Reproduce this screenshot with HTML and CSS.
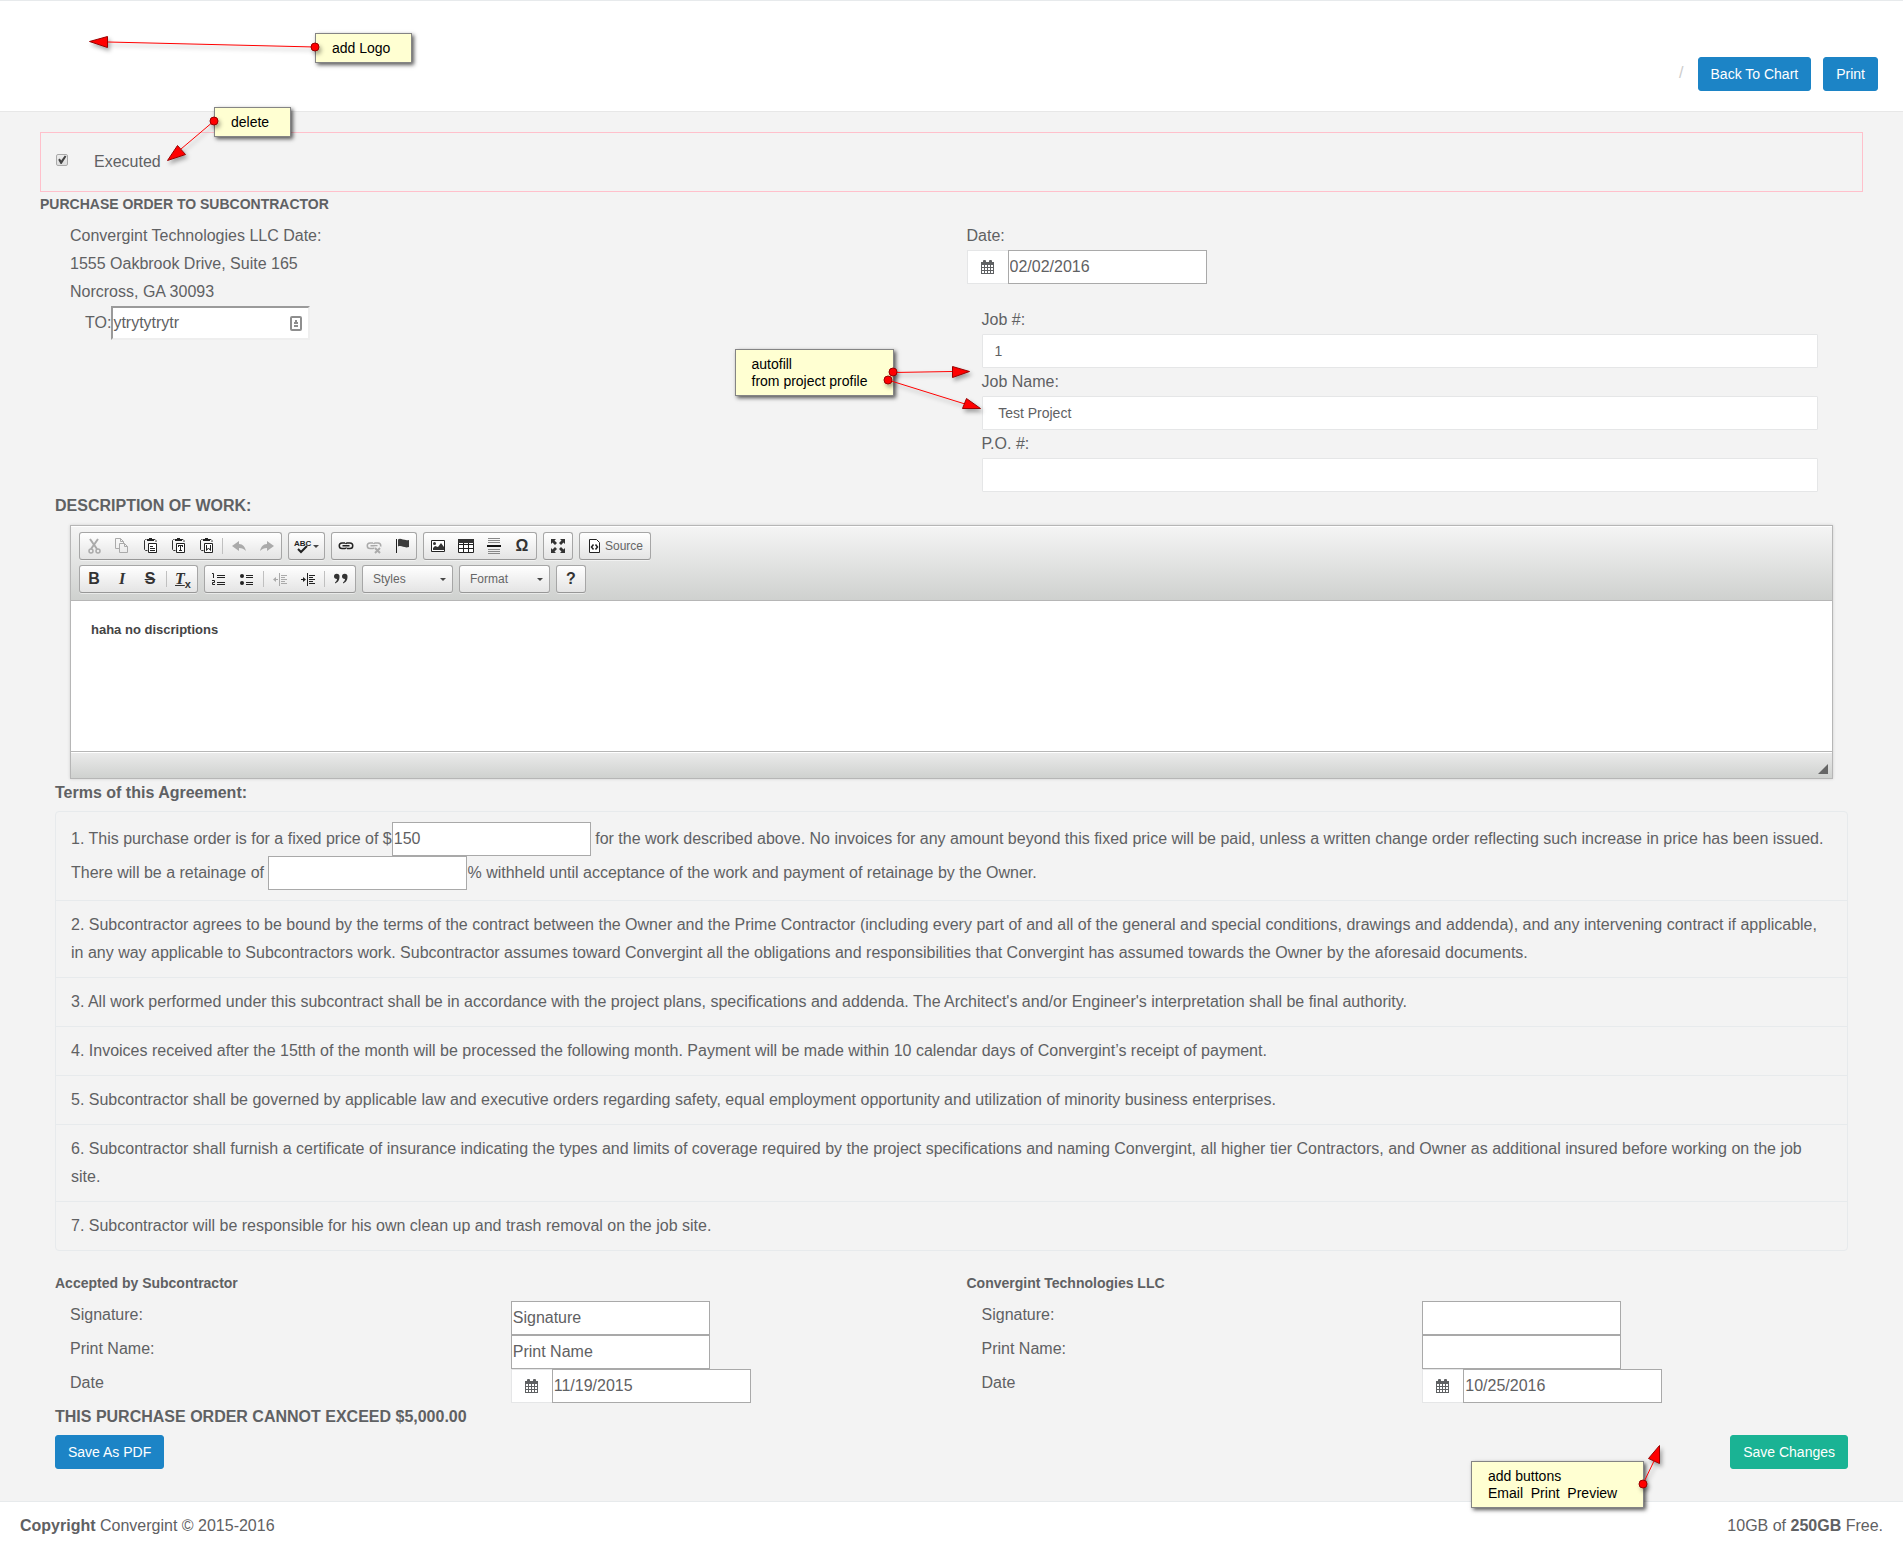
FILE: index.html
```html
<!DOCTYPE html>
<html lang="en">
<head>
<meta charset="utf-8">
<meta name="viewport" content="width=device-width, initial-scale=1">
<title>Purchase Order to Subcontractor</title>
<link rel="stylesheet" href="styles.css">
</head>
<body>
<svg class="sprite" aria-hidden="true">
  <symbol id="calendar" viewBox="0 0 14 15">
    <path fill="currentColor" fill-rule="evenodd" d="M0 2h2V1a1 1 0 0 1 1-1h1a1 1 0 0 1 1 1v1h3V1a1 1 0 0 1 1-1h1a1 1 0 0 1 1 1v1h2v12H0zM1 5v2h2V5zm3 0v2h2V5zm3 0v2h2V5zm3 0v2h2V5zM1 8v2h2V8zm3 0v2h2V8zm3 0v2h2V8zm3 0v2h2V8zM1 11v2h2v-2zm3 0v2h2v-2zm3 0v2h2v-2zm3 0v2h2v-2z"/>
  </symbol>
  <symbol id="clipboard" viewBox="0 0 16 16">
    <path fill="none" stroke="#333" d="M4.500 1.500h-1l-1 1v9l1 1h2M12 1.500h1l1 1V4"/>
    <path fill="#222" d="M5 1h2V0h3v1h2v2H5z"/>
    <path fill="#fff" stroke="#222" d="M6.500 5.500h8v9h-8z"/>
  </symbol>
  <symbol id="link" viewBox="0 0 16 16">
    <path fill="none" stroke="currentColor" stroke-width="1.500" d="M7 5H4a2.500 2.500 0 0 0 0 5.500h3a2 2 0 0 0 1.500-1M9 10.500h3A2.500 2.500 0 0 0 12 5H9a2 2 0 0 0-1.500 1M4.500 7.800h7"/>
  </symbol>
</svg>

<header class="page-header">
  <nav class="page-actions">
    <span class="slash">/</span>
    <a class="btn btn-blue" href="#">Back To Chart</a>
    <button class="btn btn-blue" type="button">Print</button>
  </nav>
  <aside class="callout callout-logo">
    <div class="note">add Logo</div>
    <svg class="pointer" viewBox="0 0 420 70" width="420" height="70">
      <path class="lead" d="M315 47 108 42"/><path class="head" d="M89.500 41.500 107.500 36.500V47.500z"/><circle class="dot" cx="315" cy="47" r="4"/>
    </svg>
  </aside>
</header>

<main class="content">
  <div class="executed">
    <input type="checkbox" id="executed" class="check" checked>
    <label for="executed">Executed</label>
    <aside class="callout callout-delete">
      <div class="note">delete</div>
      <svg class="pointer" viewBox="160 100 140 70" width="140" height="70">
        <path class="lead" d="M214 121 181 149"/><path class="head" d="M167.500 160.500 177.500 145.500 185.500 154.500z"/><circle class="dot" cx="214" cy="121" r="4"/>
      </svg>
    </aside>
  </div>

  <h1 class="heading">PURCHASE ORDER TO SUBCONTRACTOR</h1>

  <section class="halves">
    <div class="half vendor">
      <div>Convergint Technologies LLC Date:</div>
      <div>1555 Oakbrook Drive, Suite 165</div>
      <div>Norcross, GA 30093</div>
      <div class="to-row">
        <label for="to">TO:</label>
        <span class="to-field">
          <input id="to" class="plain-input inset" type="text" value="ytrytytrytr">
          <svg class="autofill-icon" viewBox="0 0 12 15" width="12" height="15" aria-hidden="true"><rect x="1" y="1" width="10" height="13" rx="1" fill="#fff" stroke="#8e8e8e" stroke-width="2"/><path fill="#8e8e8e" d="M5 4h2v2h1v2H4V6h1zM4 9h4v2H4z"/></svg>
        </span>
      </div>
    </div>
    <div class="half">
      <label class="line" for="date">Date:</label>
      <div class="date-group">
        <span class="addon"><svg width="14" height="15" aria-hidden="true"><use href="#calendar"/></svg></span>
        <input id="date" class="plain-input" type="text" value="02/02/2016">
      </div>
      <div class="job">
        <label class="line" for="job-no">Job #:</label>
        <input id="job-no" class="form-control" type="text" value="1">
        <label class="line" for="job-name">Job Name:</label>
        <input id="job-name" class="form-control" type="text" value=" Test Project">
        <label class="line" for="po-no">P.O. #:</label>
        <input id="po-no" class="form-control" type="text">
        <aside class="callout callout-autofill">
          <div class="note">autofill
from project profile</div>
          <svg class="pointer" viewBox="730 340 260 80" width="260" height="80">
            <path class="lead" d="M893 372.500 952 371.500M888 380 965 404"/><path class="head" d="M969.500 371.500 952.500 366.500V377.500zM980.500 408.500 966.500 398.500 962.500 408.500z"/><circle class="dot" cx="893" cy="372" r="4"/><circle class="dot" cx="888" cy="380" r="4"/>
          </svg>
        </aside>
      </div>
    </div>
  </section>

  <section class="body-block">
    <h2 class="strong-line">DESCRIPTION OF WORK:</h2>
    <div class="editor">
      <div class="toolbar">
        <div class="tool-row">
          <div class="group">
            <button class="tool off" type="button" aria-label="Cut"><svg viewBox="0 0 16 16"><path fill="none" stroke="currentColor" stroke-width="2" d="M4 1l7 10M12 1 5 11"/><circle cx="5" cy="13" r="2" fill="none" stroke="currentColor" stroke-width="1.500"/><circle cx="12" cy="13" r="2" fill="none" stroke="currentColor" stroke-width="1.500"/></svg></button>
            <button class="tool off" type="button" aria-label="Copy"><svg viewBox="0 0 16 16"><path fill="none" stroke="currentColor" d="M5 10.500H1.500v-10h5l3 3V5M5.500 5.500h5l3 3v6h-8zM10.500 5.500v3h3M6.500.5v3h3"/></svg></button>
            <button class="tool" type="button" aria-label="Paste"><svg viewBox="0 0 16 16"><use href="#clipboard"/><path stroke="#222" d="M8 8.500h3M8 10.500h5M8 12.500h5"/></svg></button>
            <button class="tool" type="button" aria-label="Paste as plain text"><svg viewBox="0 0 16 16"><use href="#clipboard"/><path fill="#222" d="M8 7h5v2h-1V8h-1v4h1v1H9v-1h1V8H9v1H8z"/></svg></button>
            <button class="tool" type="button" aria-label="Paste from Word"><svg viewBox="0 0 16 16"><use href="#clipboard"/><path fill="none" stroke="#222" d="M8.500 7v5.500L10.500 10l2 2.500V7"/></svg></button>
            <span class="sep"></span>
            <button class="tool off" type="button" aria-label="Undo"><svg viewBox="0 0 16 16"><path fill="currentColor" d="M1 8l7-5v3c4 0 6 3 7 7-2-2-4-3-7-3v3z"/></svg></button>
            <button class="tool off" type="button" aria-label="Redo"><svg viewBox="0 0 16 16"><path fill="currentColor" d="M15 8 8 3v3c-4 0-6 3-7 7 2-2 4-3 7-3v3z"/></svg></button>
          </div>
          <div class="group">
            <button class="tool spell" type="button" aria-label="Spell check"><svg viewBox="0 0 16 16"><text x="0" y="8" class="abc">ABC</text><path fill="none" stroke="#222" stroke-width="2" d="M4 11l3 3 6-6"/></svg><i class="caret"></i></button>
          </div>
          <div class="group">
            <button class="tool" type="button" aria-label="Link"><svg viewBox="0 0 16 16"><use href="#link"/></svg></button>
            <button class="tool off" type="button" aria-label="Unlink"><svg viewBox="0 0 16 16"><use href="#link"/><path stroke="#f2f2f2" stroke-width="3" d="M8.500 10h7"/><path stroke="currentColor" stroke-width="2" d="M9 10l5 5M14 10l-5 5"/></svg></button>
            <button class="tool" type="button" aria-label="Anchor"><svg viewBox="0 0 16 16"><path stroke="#222" d="M2.500 1v14"/><path fill="#3c3c3c" d="M4 1.500c3-2 5 1.500 11 .5v7c-5 1.500-7-2-11-.5z"/></svg></button>
          </div>
          <div class="group">
            <button class="tool" type="button" aria-label="Image"><svg viewBox="0 0 16 16"><path fill="#fff" stroke="#222" d="M1.500 2.500h13v11h-13z"/><circle cx="4.500" cy="5.500" r="1.500" fill="#333"/><path fill="#333" d="M3 12v-2l2-2 3 1 3-4 3 4v3z"/></svg></button>
            <button class="tool" type="button" aria-label="Table"><svg viewBox="0 0 16 16"><path fill="#fff" stroke="#222" d="M.5 2.500h15v12H.5zM1 6.500h14M1 10.500h14M5.500 4v10M10.500 4v10"/><path fill="#333" d="M0 1h16v4H0z"/></svg></button>
            <button class="tool" type="button" aria-label="Horizontal line"><svg viewBox="0 0 16 16"><path stroke="#888" d="M2 .5h12M2 2.500h12M2 4.500h12M2 11.500h12M2 13.500h12M2 15.500h12"/><path stroke="#111" stroke-width="2" d="M1 8h14"/></svg></button>
            <button class="tool glyph" type="button" aria-label="Special character">Ω</button>
          </div>
          <div class="group">
            <button class="tool" type="button" aria-label="Maximize"><svg viewBox="0 0 16 16"><path fill="#333" d="M1 1h5L4.500 2.500 7 5 5 7 2.500 4.500 1 6zM15 1v5l-1.500-1.500L11 7 9 5l2.500-2.500L10 1zM1 15v-5l1.500 1.500L5 9l2 2-2.500 2.500L6 15zM15 15h-5l1.500-1.500L9 11l2-2 2.500 2.500L15 10z"/></svg></button>
          </div>
          <div class="group">
            <button class="tool source" type="button"><svg viewBox="0 0 16 16"><path fill="#fff" stroke="#222" d="M2.500 1.500h7l3 3v10h-10z"/><path fill="none" stroke="#222" stroke-width="1.500" d="M6.500 6.500 4.500 9l2 2.500M8.500 6.500l2 2.500-2 2.500"/></svg>Source</button>
          </div>
        </div>
        <div class="tool-row">
          <div class="group">
            <button class="tool glyph" type="button" aria-label="Bold">B</button>
            <button class="tool glyph italic" type="button" aria-label="Italic">I</button>
            <button class="tool glyph strike" type="button" aria-label="Strikethrough">S</button>
            <span class="sep"></span>
            <button class="tool glyph" type="button" aria-label="Remove format"><span class="italic under">T</span><sub>x</sub></button>
          </div>
          <div class="group">
            <button class="tool" type="button" aria-label="Numbered list"><svg viewBox="0 0 16 16"><path stroke="#222" d="M6 4.500h8M6 6.500h8M6 11.500h8M6 13.500h8"/><path fill="none" stroke="#222" d="M1 2.500h1.500V7M1 9.500h2.500v2h-2v2H4"/></svg></button>
            <button class="tool" type="button" aria-label="Bulleted list"><svg viewBox="0 0 16 16"><path stroke="#222" d="M7 4.500h7M7 6.500h7M7 11.500h7M7 13.500h7"/><circle cx="3" cy="5" r="2" fill="#222"/><circle cx="3" cy="12" r="2" fill="#222"/></svg></button>
            <span class="sep"></span>
            <button class="tool off" type="button" aria-label="Decrease indent"><svg viewBox="0 0 16 16"><path stroke="currentColor" d="M7.500 2v13M9 4.500h6M9 6.500h4M9 8.500h6M9 10.500h4M9 12.500h6M2 8.500h4"/><path fill="currentColor" d="M1 8.500 4 6v5z"/></svg></button>
            <button class="tool" type="button" aria-label="Increase indent"><svg viewBox="0 0 16 16"><path stroke="#222" d="M7.500 2v13M9 4.500h6M9 6.500h4M9 8.500h6M9 10.500h4M9 12.500h6M1 8.500h4"/><path fill="#222" d="M6 8.500 3 6v5z"/></svg></button>
            <span class="sep"></span>
            <button class="tool" type="button" aria-label="Block quote"><svg viewBox="0 0 16 16"><path fill="#333" d="M1 5.500a2.500 2.500 0 0 1 5.500 0c0 4-2 6-4.500 7v-1c1-1 2-2 2-3.500C2 8 1 7 1 5.500zM9 5.500a2.500 2.500 0 0 1 5.500 0c0 4-2 6-4.500 7v-1c1-1 2-2 2-3.500-2 0-3-1-3-2.500z"/></svg></button>
          </div>
          <button class="combo" type="button">Styles<i class="caret"></i></button>
          <button class="combo" type="button">Format<i class="caret"></i></button>
          <div class="group">
            <button class="tool glyph" type="button" aria-label="Help">?</button>
          </div>
        </div>
      </div>
      <div class="editable" contenteditable="true" role="textbox" aria-label="Description of work" spellcheck="false">haha no discriptions</div>
      <div class="editor-foot"><span class="grip"></span></div>
    </div>

    <h2 class="strong-line">Terms of this Agreement:</h2>
    <ul class="terms">
      <li>1. This purchase order is for a fixed price of $<input class="plain-input" type="text" aria-label="Fixed price" value="150"> for the work described above. No invoices for any amount beyond this fixed price will be paid, unless a written change order reflecting such increase in price has been issued. There will be a retainage of <input class="plain-input" type="text" aria-label="Retainage percent">% withheld until acceptance of the work and payment of retainage by the Owner.</li>
      <li>2. Subcontractor agrees to be bound by the terms of the contract between the Owner and the Prime Contractor (including every part of and all of the general and special conditions, drawings and addenda), and any intervening contract if applicable, in any way applicable to Subcontractors work. Subcontractor assumes toward Convergint all the obligations and responsibilities that Convergint has assumed towards the Owner by the aforesaid documents.</li>
      <li>3. All work performed under this subcontract shall be in accordance with the project plans, specifications and addenda. The Architect's and/or Engineer's interpretation shall be final authority.</li>
      <li>4. Invoices received after the 15tth of the month will be processed the following month. Payment will be made within 10 calendar days of Convergint’s receipt of payment.</li>
      <li>5. Subcontractor shall be governed by applicable law and executive orders regarding safety, equal employment opportunity and utilization of minority business enterprises.</li>
      <li>6. Subcontractor shall furnish a certificate of insurance indicating the types and limits of coverage required by the project specifications and naming Convergint, all higher tier Contractors, and Owner as additional insured before working on the job site.</li>
      <li>7. Subcontractor will be responsible for his own clean up and trash removal on the job site.</li>
    </ul>
  </section>

  <section class="halves">
    <div class="half">
      <h3 class="heading">Accepted by Subcontractor</h3>
      <div class="sign">
        <label for="sub-sign">Signature:</label><input id="sub-sign" class="plain-input" type="text" value="Signature">
        <label for="sub-name">Print Name:</label><input id="sub-name" class="plain-input" type="text" value="Print Name">
        <label for="sub-date">Date</label>
        <div class="date-group">
          <span class="addon"><svg width="14" height="15" aria-hidden="true"><use href="#calendar"/></svg></span>
          <input id="sub-date" class="plain-input" type="text" value="11/19/2015">
        </div>
      </div>
    </div>
    <div class="half">
      <h3 class="heading">Convergint Technologies LLC</h3>
      <div class="sign">
        <label for="con-sign">Signature:</label><input id="con-sign" class="plain-input" type="text">
        <label for="con-name">Print Name:</label><input id="con-name" class="plain-input" type="text">
        <label for="con-date">Date</label>
        <div class="date-group">
          <span class="addon"><svg width="14" height="15" aria-hidden="true"><use href="#calendar"/></svg></span>
          <input id="con-date" class="plain-input" type="text" value="10/25/2016">
        </div>
      </div>
    </div>
  </section>

  <section class="body-block">
    <p class="strong-line">THIS PURCHASE ORDER CANNOT EXCEED $5,000.00</p>
    <div class="save-row">
      <button class="btn btn-blue" type="button">Save As PDF</button>
      <button class="btn btn-green" type="button">Save Changes</button>
      <aside class="callout callout-buttons">
        <div class="note">add buttons
Email  Print  Preview</div>
        <svg class="pointer" viewBox="1471 1435 200 80" width="200" height="80">
          <path class="lead" d="M1643 1484 1654 1461"/><path class="head" d="M1659.500 1445.500 1648.500 1458.500 1659.500 1463.500z"/><circle class="dot" cx="1643" cy="1484" r="4"/>
        </svg>
      </aside>
    </div>
  </section>
</main>

<footer class="page-footer">
  <div><strong>Copyright</strong> Convergint © 2015-2016</div>
  <div>10GB of <strong>250GB</strong> Free.</div>
</footer>
</body>
</html>
```

FILE: styles.css
```css
* { box-sizing: border-box; }

body {
  margin: 0;
  background: #f3f3f3;
  color: #5f6163;
  font: 16px/28px "Liberation Sans", Arial, sans-serif;
}

h1, h2, h3, p, ul { margin: 0; padding: 0; }
input, button { font: inherit; color: inherit; margin: 0; }
.sprite { display: none; }

/* Header */
.page-header {
  position: relative;
  padding: 56px 25px 20px;
  background: #fff;
  border-top: 1px solid #e7eaec;
  border-bottom: 1px solid #e7e7e7;
}
.page-actions { display: flex; justify-content: flex-end; gap: 12px; }
.slash { color: #ccc; margin-right: 2px; line-height: 32px; }

.btn {
  display: inline-block;
  padding: 6px 12px;
  border: 1px solid transparent;
  border-radius: 3px;
  color: #fff;
  font-size: 14px;
  line-height: 20px;
  text-decoration: none;
}
.btn-blue { background: #1c84c6; border-color: #1c84c6; }
.btn-green { background: #1ab394; border-color: #1ab394; }

/* Content */
.content { padding: 20px 40px 32px; }
.executed {
  position: relative;
  display: flex;
  gap: 26px;
  padding: 15px;
  border: 1px solid #ffc0cb;
}
.check {
  appearance: none;
  width: 12px;
  height: 12px;
  margin-top: 6px;
  border: 1px solid #a9a9a9;
  border-radius: 2px;
  background: linear-gradient(#ececec, #dedede);
}
.check:checked::before {
  content: "";
  display: block;
  width: 10px;
  height: 10px;
  background: #444;
  clip-path: polygon(12% 48%, 28% 36%, 42% 56%, 78% 4%, 94% 16%, 46% 90%, 36% 90%);
}

.heading { font-size: 14px; line-height: 24px; font-weight: bold; padding-bottom: 6px; }
.strong-line { font-size: 16px; line-height: 28px; font-weight: bold; }

.halves { display: grid; grid-template-columns: 1fr 1fr; }
.half { padding: 0 15px; }
.vendor { padding-left: 30px; }
.line { display: block; }

.to-row { display: flex; padding-left: 15px; line-height: 34px; }
.to-field { position: relative; }
.autofill-icon { position: absolute; right: 8px; top: 10px; }

.plain-input {
  width: 199px;
  height: 34px;
  padding: 0 1px;
  border: 1px solid #a9a9a9;
  border-radius: 0;
  background: #fff;
}
.inset {
  display: block;
  padding: 0;
  border: 2px solid;
  border-color: #9a9a9a #eee #eee #9a9a9a;
}

.date-group { display: flex; }
.addon {
  display: flex;
  align-items: center;
  justify-content: center;
  width: 41px;
  background: #fff;
  border: 1px solid #e5e6e7;
  border-right: 0;
}
.job { position: relative; margin: 22px 30px 0 15px; }
.form-control {
  display: block;
  width: 100%;
  height: 34px;
  padding: 6px 12px;
  border: 1px solid #e5e6e7;
  border-radius: 1px;
  background: #fff;
  font-size: 14px;
}

.body-block { padding: 0 15px; }

/* Rich text editor */
.editor {
  margin: 5px 15px 0;
  border: 1px solid #b6b6b6;
  box-shadow: 0 0 3px rgba(0, 0, 0, .15);
}
.toolbar {
  display: flex;
  flex-direction: column;
  gap: 5px;
  padding: 6px 8px 7px;
  background: linear-gradient(#f5f5f5, #cfd1cf);
  border-bottom: 1px solid #b6b6b6;
  box-shadow: inset 0 1px 0 #fff;
}
.tool-row { display: flex; gap: 6px; }
.group, .combo {
  display: flex;
  height: 28px;
  border: 1px solid #a6a6a6;
  border-bottom-color: #979797;
  border-radius: 3px;
  background: linear-gradient(#fff, #e4e4e4);
  box-shadow: 0 1px 0 rgba(255, 255, 255, .5);
}
.tool {
  display: flex;
  align-items: center;
  justify-content: center;
  width: 28px;
  padding: 0;
  border: 0;
  background: none;
  color: #222;
}
.tool svg { width: 16px; height: 16px; overflow: visible; }
.off { color: #aaa; }
.spell { width: 35px; gap: 3px; }
.abc { font: bold 8px "Liberation Sans", Arial, sans-serif; fill: #222; }
.source { width: 70px; gap: 2px; color: #666; font-size: 12px; }
.glyph { font-size: 16px; font-weight: bold; line-height: 16px; color: #333; }
.italic { font-style: italic; font-family: "Liberation Serif", "Times New Roman", serif; }
.strike { text-decoration: line-through; }
.under { text-decoration: underline; }
.glyph sub { font-size: 11px; align-self: flex-end; }
.sep { width: 1px; margin: 5px 2px; background: #c0c0c0; }
.caret { border: 3px solid transparent; border-top-color: #474747; border-bottom: 0; }
.combo {
  align-items: center;
  justify-content: space-between;
  width: 91px;
  padding: 0 6px 0 10px;
  color: #666;
  font-size: 12px;
}
.editable {
  height: 150px;
  padding: 15px 20px;
  background: #fff;
  color: #444;
  font-size: 13px;
  font-weight: bold;
}
.editor-foot {
  display: flex;
  justify-content: flex-end;
  align-items: flex-end;
  height: 27px;
  padding: 4px;
  border-top: 1px solid #b6b6b6;
  background: linear-gradient(#ebebeb, #cfd1cf);
  box-shadow: inset 0 1px 0 #fff;
}
.grip { border: 5px solid transparent; border-right-color: #666; border-bottom-color: #666; }

/* Terms */
.terms {
  margin: 4px 0 20px;
  border: 1px solid #e7eaec;
  border-radius: 4px;
  list-style: none;
}
.terms li { padding: 10px 15px; }
.terms li + li { border-top: 1px solid #e7eaec; }

/* Signatures */
.sign {
  display: grid;
  grid-template-columns: 1fr 1fr;
  grid-auto-rows: 34px;
  column-gap: 30px;
}
.sign label { padding-left: 15px; }

.save-row {
  position: relative;
  display: flex;
  justify-content: space-between;
  margin-top: 4px;
}

.page-footer {
  display: flex;
  justify-content: space-between;
  padding: 10px 20px;
  background: #fff;
  border-top: 1px solid #e7eaec;
}

/* Review callouts */
.callout { position: absolute; z-index: 2; }
.note {
  position: absolute;
  padding: 6px 16px 5px;
  border: 1px solid #848484;
  background: #ffffd2;
  box-shadow: 2px 2px 4px rgba(0, 0, 0, .65);
  color: #000;
  font-size: 14px;
  line-height: 17px;
  white-space: pre;
}
.pointer {
  position: relative;
  display: block;
  filter: drop-shadow(2px 3px 2px rgba(0, 0, 0, .35));
}
.lead { fill: none; stroke: #f00; }
.head, .dot { fill: #f00; stroke: #900; }

.callout-logo { left: 0; top: -1px; }
.callout-logo .note { left: 315px; top: 33px; width: 97px; }
.callout-delete { left: 119px; top: -33px; }
.callout-delete .note { left: 54px; top: 7px; width: 77px; }
.callout-autofill { left: -252px; top: 34px; }
.callout-autofill .note { left: 5px; top: 9px; width: 159px; }
.callout-buttons { right: 177px; top: 0; }
.callout-buttons .note { left: 0; top: 26px; width: 173px; }
```
